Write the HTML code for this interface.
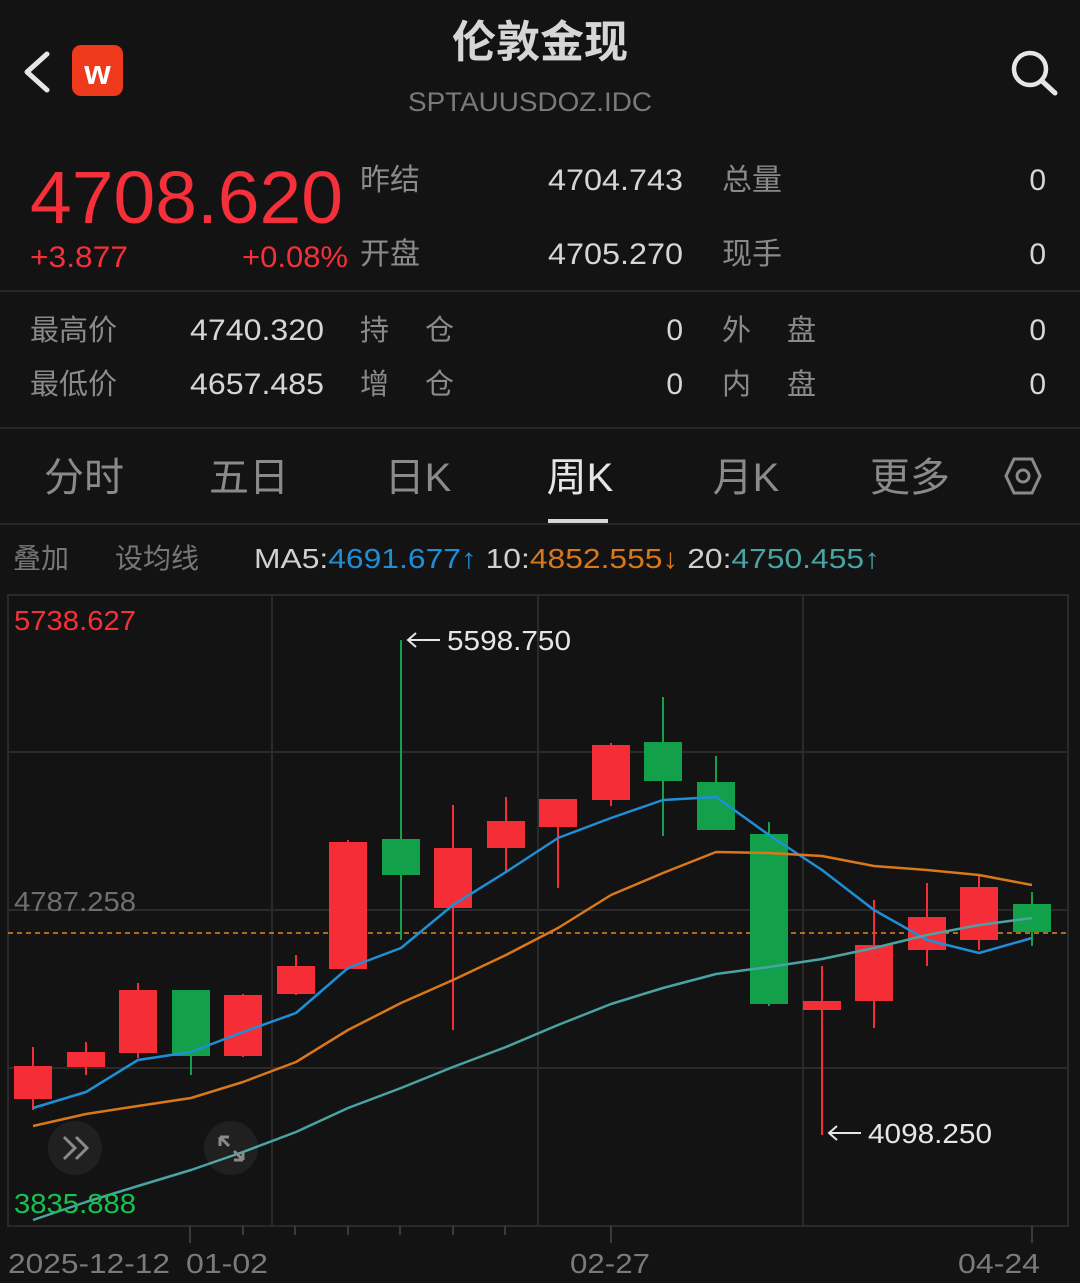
<!DOCTYPE html>
<html><head><meta charset="utf-8"><style>
html,body{margin:0;padding:0;background:#131313;width:1080px;height:1283px;overflow:hidden}
svg{display:block}
text{font-family:"Liberation Sans","Noto Sans CJK SC",sans-serif}
</style></head><body>
<svg width="1080" height="1283" viewBox="0 0 1080 1283" xmlns="http://www.w3.org/2000/svg">
<rect width="1080" height="1283" fill="#131313"/>
<!-- header -->
<path d="M47 54 L27 72 L47 90" stroke="#e6e6e6" stroke-width="5" fill="none" stroke-linecap="round" stroke-linejoin="round"/>
<rect x="72" y="45" width="51" height="51" rx="9" fill="#ee3a1a"/>
<text x="97.5" y="84" font-size="34" font-weight="bold" fill="#fff" text-anchor="middle">w</text>
<text x="540" y="57" font-size="44" fill="#d6d6d6" text-anchor="middle" font-weight="bold">伦敦金现</text>
<text x="408" y="111" font-size="27" fill="#7a7a7a" textLength="244" lengthAdjust="spacingAndGlyphs">SPTAUUSDOZ.IDC</text>
<circle cx="1030" cy="69" r="16" stroke="#e6e6e6" stroke-width="4.5" fill="none"/>
<line x1="1042" y1="81" x2="1055" y2="93" stroke="#e6e6e6" stroke-width="5" stroke-linecap="round"/>
<!-- price block -->
<text x="30" y="223" font-size="74" fill="#f5303a" textLength="313" lengthAdjust="spacingAndGlyphs">4708.620</text>
<text x="30" y="267" font-size="30" fill="#f5303a" textLength="98" lengthAdjust="spacingAndGlyphs">+3.877</text>
<text x="242" y="267" font-size="30" fill="#f5303a" textLength="106" lengthAdjust="spacingAndGlyphs">+0.08%</text>
<g font-size="30" fill="#8a8a8a">
<text x="360" y="190">昨结</text><text x="360" y="264">开盘</text>
<text x="722" y="190">总量</text><text x="722" y="264">现手</text>
</g>
<g font-size="30" fill="#d6d6d6">
<text x="548" y="190" textLength="135" lengthAdjust="spacingAndGlyphs">4704.743</text><text x="548" y="264" textLength="135" lengthAdjust="spacingAndGlyphs">4705.270</text>
</g>
<g font-size="30" fill="#d6d6d6" text-anchor="end">
<text x="1046" y="190">0</text><text x="1046" y="264">0</text>
</g>
<line x1="0" y1="291" x2="1080" y2="291" stroke="#262626" stroke-width="2"/>
<g font-size="29" fill="#8a8a8a">
<text x="30" y="340">最高价</text><text x="30" y="394">最低价</text>
<text x="360" y="340">持</text><text x="425" y="340">仓</text>
<text x="360" y="394">增</text><text x="425" y="394">仓</text>
<text x="722" y="340">外</text><text x="787" y="340">盘</text>
<text x="722" y="394">内</text><text x="787" y="394">盘</text>
</g>
<g font-size="30" fill="#d6d6d6">
<text x="190" y="340" textLength="134" lengthAdjust="spacingAndGlyphs">4740.320</text><text x="190" y="394" textLength="134" lengthAdjust="spacingAndGlyphs">4657.485</text>
</g>
<g font-size="30" fill="#d6d6d6" text-anchor="end">
<text x="683" y="340">0</text><text x="683" y="394">0</text>
<text x="1046" y="340">0</text><text x="1046" y="394">0</text>
</g>
<line x1="0" y1="428" x2="1080" y2="428" stroke="#262626" stroke-width="2"/>
<!-- tabs -->
<g font-size="40" fill="#8a8a8a" text-anchor="middle">
<text x="84" y="491">分时</text><text x="249" y="491">五日</text>
<text x="418" y="491">日K</text><text x="580" y="491" fill="#e6e6e6">周K</text>
<text x="746" y="491">月K</text><text x="910" y="491">更多</text>
</g>
<path d="M1006 476 L1014 459 L1032 459 L1040 476 L1032 493 L1014 493 Z" stroke="#8a8a8a" stroke-width="3" fill="none"/>
<circle cx="1023" cy="476" r="6" stroke="#8a8a8a" stroke-width="3" fill="none"/>
<rect x="548" y="519" width="60" height="4" fill="#d6d6d6"/>
<line x1="0" y1="524" x2="1080" y2="524" stroke="#262626" stroke-width="2"/>
<!-- MA row -->
<g font-size="28">
<text x="13" y="568" fill="#777">叠加</text><text x="115" y="568" fill="#777">设均线</text>
<text x="254" y="568" textLength="626" lengthAdjust="spacingAndGlyphs"><tspan fill="#d0d0d0">MA5:</tspan><tspan fill="#1e8fd6">4691.677↑</tspan><tspan fill="#d0d0d0"> 10:</tspan><tspan fill="#d9781a">4852.555↓</tspan><tspan fill="#d0d0d0"> 20:</tspan><tspan fill="#4aa3a3">4750.455↑</tspan></text>
</g>
<!-- chart grid -->
<rect x="8" y="595" width="1060" height="631" fill="none" stroke="#2a2a2a" stroke-width="2"/>
<g stroke="#2a2a2a" stroke-width="2">
<line x1="272" y1="595" x2="272" y2="1226"/><line x1="538" y1="595" x2="538" y2="1226"/><line x1="803" y1="595" x2="803" y2="1226"/>
<line x1="8" y1="752" x2="1068" y2="752"/><line x1="8" y1="910" x2="1068" y2="910"/><line x1="8" y1="1068" x2="1068" y2="1068"/>
</g>
<g stroke="#3a3a3a" stroke-width="2">
<line x1="190" y1="1226" x2="190" y2="1243"/><line x1="243" y1="1226" x2="243" y2="1235"/><line x1="295" y1="1226" x2="295" y2="1235"/>
<line x1="348" y1="1226" x2="348" y2="1235"/><line x1="400" y1="1226" x2="400" y2="1235"/><line x1="453" y1="1226" x2="453" y2="1235"/>
<line x1="505" y1="1226" x2="505" y2="1235"/><line x1="611" y1="1226" x2="611" y2="1243"/><line x1="1032" y1="1226" x2="1032" y2="1243"/>
</g>
<text x="14" y="630" font-size="28" fill="#f5303a" textLength="122" lengthAdjust="spacingAndGlyphs">5738.627</text>
<text x="14" y="911" font-size="28" fill="#6f6f6f" textLength="122" lengthAdjust="spacingAndGlyphs">4787.258</text>
<line x1="8" y1="933" x2="1068" y2="933" stroke="#e08a1e" stroke-width="1.5" stroke-dasharray="5,4"/>
<!-- candles -->
<g stroke-width="2">
<g fill="#f52d37" stroke="#f52d37">
<line x1="33" y1="1047" x2="33" y2="1110"/><rect x="15" y="1067" width="36" height="31"/>
<line x1="86" y1="1042" x2="86" y2="1075"/><rect x="68" y="1053" width="36" height="13"/>
<line x1="138" y1="983" x2="138" y2="1058"/><rect x="120" y="991" width="36" height="61"/>
<line x1="243" y1="994" x2="243" y2="1057"/><rect x="225" y="996" width="36" height="59"/>
<line x1="296" y1="955" x2="296" y2="995"/><rect x="278" y="967" width="36" height="26"/>
<line x1="348" y1="840" x2="348" y2="970"/><rect x="330" y="843" width="36" height="125"/>
<line x1="453" y1="805" x2="453" y2="1030"/><rect x="435" y="849" width="36" height="58"/>
<line x1="506" y1="797" x2="506" y2="873"/><rect x="488" y="822" width="36" height="25"/>
<line x1="558" y1="800" x2="558" y2="888"/><rect x="540" y="800" width="36" height="26"/>
<line x1="611" y1="743" x2="611" y2="806"/><rect x="593" y="746" width="36" height="53"/>
<line x1="822" y1="966" x2="822" y2="1135"/><rect x="804" y="1002" width="36" height="7"/>
<line x1="874" y1="900" x2="874" y2="1028"/><rect x="856" y="946" width="36" height="54"/>
<line x1="927" y1="883" x2="927" y2="966"/><rect x="909" y="918" width="36" height="31"/>
<line x1="979" y1="875" x2="979" y2="950"/><rect x="961" y="888" width="36" height="51"/>
</g>
<g fill="#12a04a" stroke="#12a04a">
<line x1="191" y1="991" x2="191" y2="1075"/><rect x="173" y="991" width="36" height="64"/>
<line x1="401" y1="640" x2="401" y2="940"/><rect x="383" y="840" width="36" height="34"/>
<line x1="663" y1="697" x2="663" y2="836"/><rect x="645" y="743" width="36" height="37"/>
<line x1="716" y1="756" x2="716" y2="829"/><rect x="698" y="783" width="36" height="46"/>
<line x1="769" y1="822" x2="769" y2="1006"/><rect x="751" y="835" width="36" height="168"/>
<line x1="1032" y1="892" x2="1032" y2="946"/><rect x="1014" y="905" width="36" height="26"/>
</g>
</g>
<!-- MA lines -->
<g fill="none" stroke-width="2.5" stroke-linejoin="round">
<polyline stroke="#1e8fd6" points="33,1108 86,1092 138,1060 191,1052 243,1032 296,1013 348,968 401,948 453,905 506,872 558,838 611,818 663,800 716,797 769,835 822,870 874,910 927,940 979,953 1032,938"/>
<polyline stroke="#d9781a" points="33,1126 86,1114 138,1106 191,1098 243,1082 296,1062 348,1030 401,1003 453,980 506,955 558,928 611,895 663,873 716,852 769,853 822,856 874,866 927,870 979,875 1032,885"/>
<polyline stroke="#4aa3a3" points="33,1220 86,1202 138,1186 191,1170 243,1152 296,1132 348,1108 401,1088 453,1067 506,1047 558,1025 611,1004 663,988 716,974 769,967 822,959 874,948 927,935 979,925 1032,918"/>
</g>
<text x="14" y="1213" font-size="28" fill="#18c050" textLength="122" lengthAdjust="spacingAndGlyphs">3835.888</text>
<!-- annotations -->
<g stroke="#e6e6e6" stroke-width="2" fill="none">
<path d="M408 640 H440 M416 633 L408 640 L416 647"/>
<path d="M829 1133 H861 M837 1126 L829 1133 L837 1140"/>
</g>
<text x="447" y="650" font-size="28" fill="#e6e6e6" textLength="124" lengthAdjust="spacingAndGlyphs">5598.750</text>
<text x="868" y="1143" font-size="28" fill="#e6e6e6" textLength="124" lengthAdjust="spacingAndGlyphs">4098.250</text>
<!-- overlay buttons -->
<circle cx="75" cy="1148" r="27" fill="#ffffff" fill-opacity="0.06"/>
<path d="M64 1137 L75 1148 L64 1159 M76 1137 L87 1148 L76 1159" stroke="#8a8a8a" stroke-width="3" fill="none"/>
<circle cx="231" cy="1148" r="27" fill="#ffffff" fill-opacity="0.06"/>
<path d="M220 1137 L229 1146 M220 1137 h9 M220 1137 v9 M243 1160 L234 1151 M243 1160 h-9 M243 1160 v-9" stroke="#8a8a8a" stroke-width="3" fill="none"/>
<!-- x axis labels -->
<g font-size="28" fill="#7a7a7a">
<text x="8" y="1273" textLength="162" lengthAdjust="spacingAndGlyphs">2025-12-12</text>
<text x="186" y="1273" textLength="82" lengthAdjust="spacingAndGlyphs">01-02</text>
<text x="570" y="1273" textLength="80" lengthAdjust="spacingAndGlyphs">02-27</text>
<text x="958" y="1273" textLength="82" lengthAdjust="spacingAndGlyphs">04-24</text>
</g>
</svg>
</body></html>
